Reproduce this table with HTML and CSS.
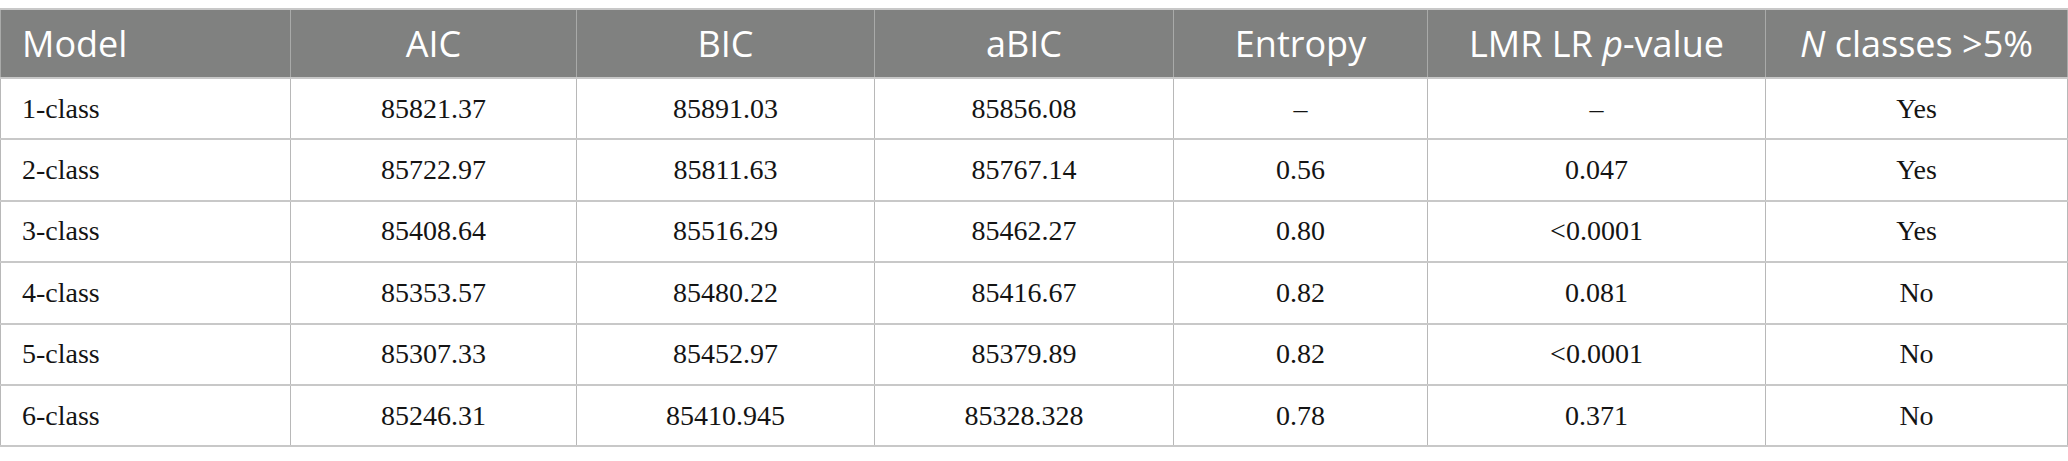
FILE: index.html
```html
<!DOCTYPE html>
<html lang="en">
<head>
<meta charset="utf-8">
<title>Model fit</title>
<link rel="stylesheet" href="styles.css">
</head>
<body>
<table class="fit">
  <colgroup>
    <col class="c1"><col class="c2"><col class="c3"><col class="c4"><col class="c5"><col class="c6"><col class="c7">
  </colgroup>
  <thead>
    <tr>
      <th class="left">Model</th>
      <th>AIC</th>
      <th>BIC</th>
      <th>aBIC</th>
      <th>Entropy</th>
      <th>LMR LR <i>p</i>-value</th>
      <th><i>N</i> classes &gt;5%</th>
    </tr>
  </thead>
  <tbody>
    <tr><td class="left">1-class</td><td>85821.37</td><td>85891.03</td><td>85856.08</td><td>–</td><td>–</td><td>Yes</td></tr>
    <tr><td class="left">2-class</td><td>85722.97</td><td>85811.63</td><td>85767.14</td><td>0.56</td><td>0.047</td><td>Yes</td></tr>
    <tr><td class="left">3-class</td><td>85408.64</td><td>85516.29</td><td>85462.27</td><td>0.80</td><td>&lt;0.0001</td><td>Yes</td></tr>
    <tr><td class="left">4-class</td><td>85353.57</td><td>85480.22</td><td>85416.67</td><td>0.82</td><td>0.081</td><td>No</td></tr>
    <tr><td class="left">5-class</td><td>85307.33</td><td>85452.97</td><td>85379.89</td><td>0.82</td><td>&lt;0.0001</td><td>No</td></tr>
    <tr><td class="left">6-class</td><td>85246.31</td><td>85410.945</td><td>85328.328</td><td>0.78</td><td>0.371</td><td>No</td></tr>
  </tbody>
</table>
</body>
</html>
```

FILE: styles.css
```css
html, body {
  margin: 0;
  padding: 0;
  background: #ffffff;
}
body {
  padding-top: 8px;
}
.fit {
  width: 2067px;
  border-collapse: collapse;
  table-layout: fixed;
}
.c1 { width: 290px; }
.c2 { width: 286px; }
.c3 { width: 298px; }
.c4 { width: 299px; }
.c5 { width: 254px; }
.c6 { width: 338px; }
.c7 { width: 302px; }

.fit th {
  background: #808180;
  color: #ffffff;
  font-family: "Open Sans", "DejaVu Sans", sans-serif;
  font-weight: 400;
  font-size: 36px;
  height: 67px;
  padding: 0 6px;
  text-align: center;
  vertical-align: middle;
  border-top: 2px solid #c8c8c8;
  border-bottom: 2px solid #c8c8c8;
  border-left: 1px solid #a9aaa9;
  border-right: 1px solid #a9aaa9;
  white-space: nowrap;
  line-height: 1.2;
}
.fit th i {
  font-style: italic;
}
.fit td {
  font-family: "Liberation Serif", "Times New Roman", serif;
  font-size: 28px;
  color: #141414;
  height: 59.4px;
  padding: 0 8px;
  text-align: center;
  vertical-align: middle;
  border-top: 2px solid #c8c8c8;
  border-bottom: 2px solid #c8c8c8;
  border-left: 1px solid #b8b8b8;
  border-right: 1px solid #b8b8b8;
  white-space: nowrap;
}
.fit .left {
  text-align: left;
  padding-left: 21px;
}
```
